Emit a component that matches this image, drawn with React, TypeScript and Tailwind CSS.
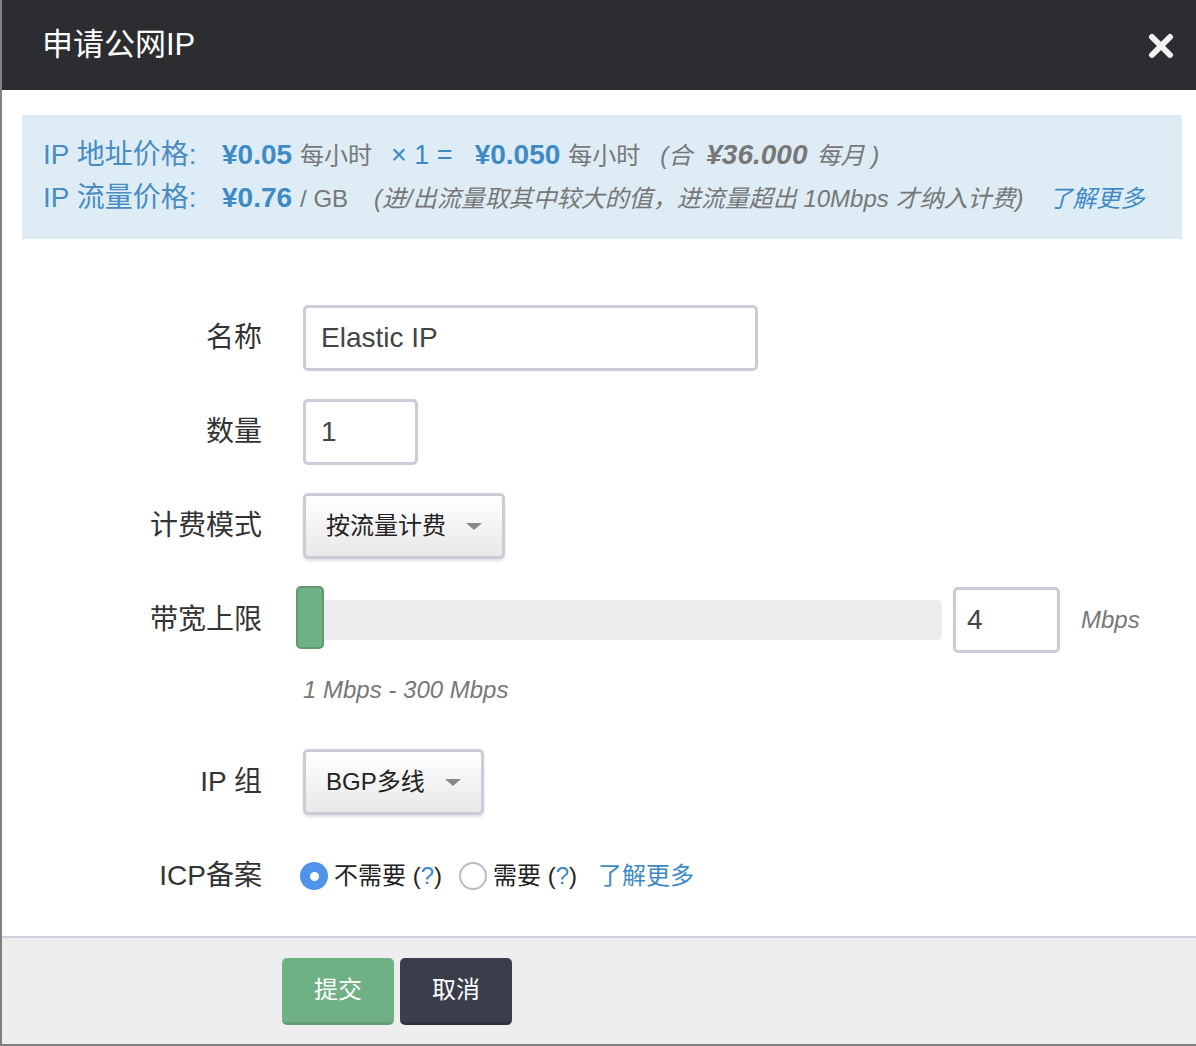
import React from "react";

const font = "font-['Liberation_Sans','Noto_Sans_CJK_SC',sans-serif]";

function Caret() {
  return <span className="ml-5 inline-block h-0 w-0 border-x-[8px] border-t-[7px] border-x-transparent border-t-[#888]" />;
}

function Select({ label }: { label: string }) {
  return (
    <div className="flex h-[66px] items-center rounded-[5px] border-[3px] border-[#cccbd8] bg-linear-to-b from-white to-[#e8e8e8] pl-[20px] pr-[20px] text-[24px] text-[#222] shadow-[0_2px_3px_rgba(0,0,0,0.12)]">
      {label}
      <Caret />
    </div>
  );
}

function Row({ label, children }: { label: string; children: React.ReactNode }) {
  return (
    <div className="flex h-[66px] items-center">
      <div className="w-[260px] shrink-0 text-right text-[28px] text-[#333]">{label}</div>
      <div className="ml-[41px] flex flex-1 items-center">{children}</div>
    </div>
  );
}

export default function App() {
  return (
    <div className={`${font} h-[1046px] w-[1196px] overflow-hidden border-b-2 border-l-2 border-[#808080] bg-white`}>
      <header className="flex h-[90px] items-center justify-between bg-[#2c2d30] pl-[40px] pr-[22px]">
        <h1 className="text-[31px] text-white">申请公网IP</h1>
        <svg width="26" height="26" viewBox="0 0 26 26" className="mt-[1px]">
          <path d="M4 4 L22 22 M22 4 L4 22" stroke="#f2f2f2" strokeWidth="6" strokeLinecap="round" />
        </svg>
      </header>

      <div className="pl-[20px] pr-[14px] pt-[25px]">
        <div className="bg-[#ddecf5] px-[21px] py-[19px] leading-[42px]">
          <div className="flex items-baseline whitespace-nowrap">
            <span className="w-[179px] text-[28px] text-[#4a8cc2]">IP 地址价格:</span>
            <span className="text-[28px] font-bold text-[#3e8ac6]">¥0.05</span>
            <span className="ml-[8px] text-[24px] text-[#777]">每小时</span>
            <span className="ml-[19px] text-[27px] text-[#3e8ac6]">× 1 =</span>
            <span className="ml-[22px] text-[28px] font-bold text-[#3e8ac6]">¥0.050</span>
            <span className="ml-[8px] text-[24px] text-[#777]">每小时</span>
            <span className="ml-[20px] text-[24px] italic text-[#777]">(合</span>
            <span className="ml-[14px] text-[28px] font-bold italic text-[#777]">¥36.000</span>
            <span className="ml-[9px] text-[24px] italic text-[#777]">每月 )</span>
          </div>
          <div className="flex items-baseline whitespace-nowrap">
            <span className="w-[179px] text-[28px] text-[#4a8cc2]">IP 流量价格:</span>
            <span className="text-[28px] font-bold text-[#3e8ac6]">¥0.76</span>
            <span className="ml-[8px] text-[24px] text-[#777]">/ GB</span>
            <span className="ml-[26px] text-[24px] italic text-[#777]">(进/出流量取其中较大的值，进流量超出 10Mbps 才纳入计费)</span>
            <span className="ml-[25px] text-[24px] italic text-[#3e8ac6]">了解更多</span>
          </div>
        </div>
      </div>

      <div className="mt-[66px] flex flex-col">
        <div className="flex flex-col gap-[28px]">
          <Row label="名称">
            <div className="flex h-[66px] w-[455px] items-center rounded-[5px] border-[3px] border-[#cccbd8] pl-[15px] text-[28px] text-[#444]">
              Elastic IP
            </div>
          </Row>
          <Row label="数量">
            <div className="flex h-[66px] w-[115px] items-center rounded-[5px] border-[3px] border-[#cccbd8] pl-[15px] text-[28px] text-[#444]">
              1
            </div>
          </Row>
          <Row label="计费模式">
            <Select label="按流量计费" />
          </Row>
          <Row label="带宽上限">
            <div className="relative -ml-[7px] flex h-[66px] w-[646px] items-center">
              <div className="ml-[4px] h-[40px] flex-1 rounded-r-[5px] bg-[#ececec]" />
              <div className="absolute left-0 top-[-1px] h-[63px] w-[28px] rounded-[5px] border-2 border-[#5d9a70] bg-[#6fb184]" />
            </div>
            <div className="ml-[11px] flex h-[66px] w-[107px] items-center rounded-[5px] border-[3px] border-[#cccbd8] pl-[11px] text-[28px] text-[#444]">
              4
            </div>
            <span className="ml-[21px] text-[24px] italic text-[#777]">Mbps</span>
          </Row>
        </div>
        <div className="ml-[301px] mt-[23px] text-[24px] italic leading-[28px] text-[#777]">1 Mbps - 300 Mbps</div>
        <div className="mt-[45px] flex flex-col gap-[28px]">
          <Row label="IP 组">
            <Select label="BGP多线" />
          </Row>
          <Row label="ICP备案">
            <div className="-ml-[3px] flex items-center text-[24px] text-[#222]">
              <span className="flex h-[28px] w-[28px] items-center justify-center rounded-full bg-[#4f94ea]">
                <span className="h-[9px] w-[9px] rounded-full bg-white" />
              </span>
              <span className="ml-[6px]">不需要 (<span className="text-[#3e8ac6]">?</span>)</span>
              <span className="ml-[17px] h-[28px] w-[28px] rounded-full border-2 border-[#bdbdbd] bg-white" />
              <span className="ml-[6px]">需要 (<span className="text-[#3e8ac6]">?</span>)</span>
              <span className="ml-[21px] text-[#3e8ac6]">了解更多</span>
            </div>
          </Row>
        </div>
        <div className="mt-[27px] h-[108px] border-t-2 border-[#d0cfdb] bg-[#eeeeee] pl-[280px] pt-[20px]">
          <div className="flex gap-[6px]">
            <button className="h-[67px] w-[112px] rounded-[5px] border-b-[3px] border-[#64a077] bg-[#6fb184] text-[24px] text-white">提交</button>
            <button className="h-[67px] w-[112px] rounded-[5px] border-b-[3px] border-[#323541] bg-[#3a3d4b] text-[24px] text-white">取消</button>
          </div>
        </div>
      </div>
    </div>
  );
}
